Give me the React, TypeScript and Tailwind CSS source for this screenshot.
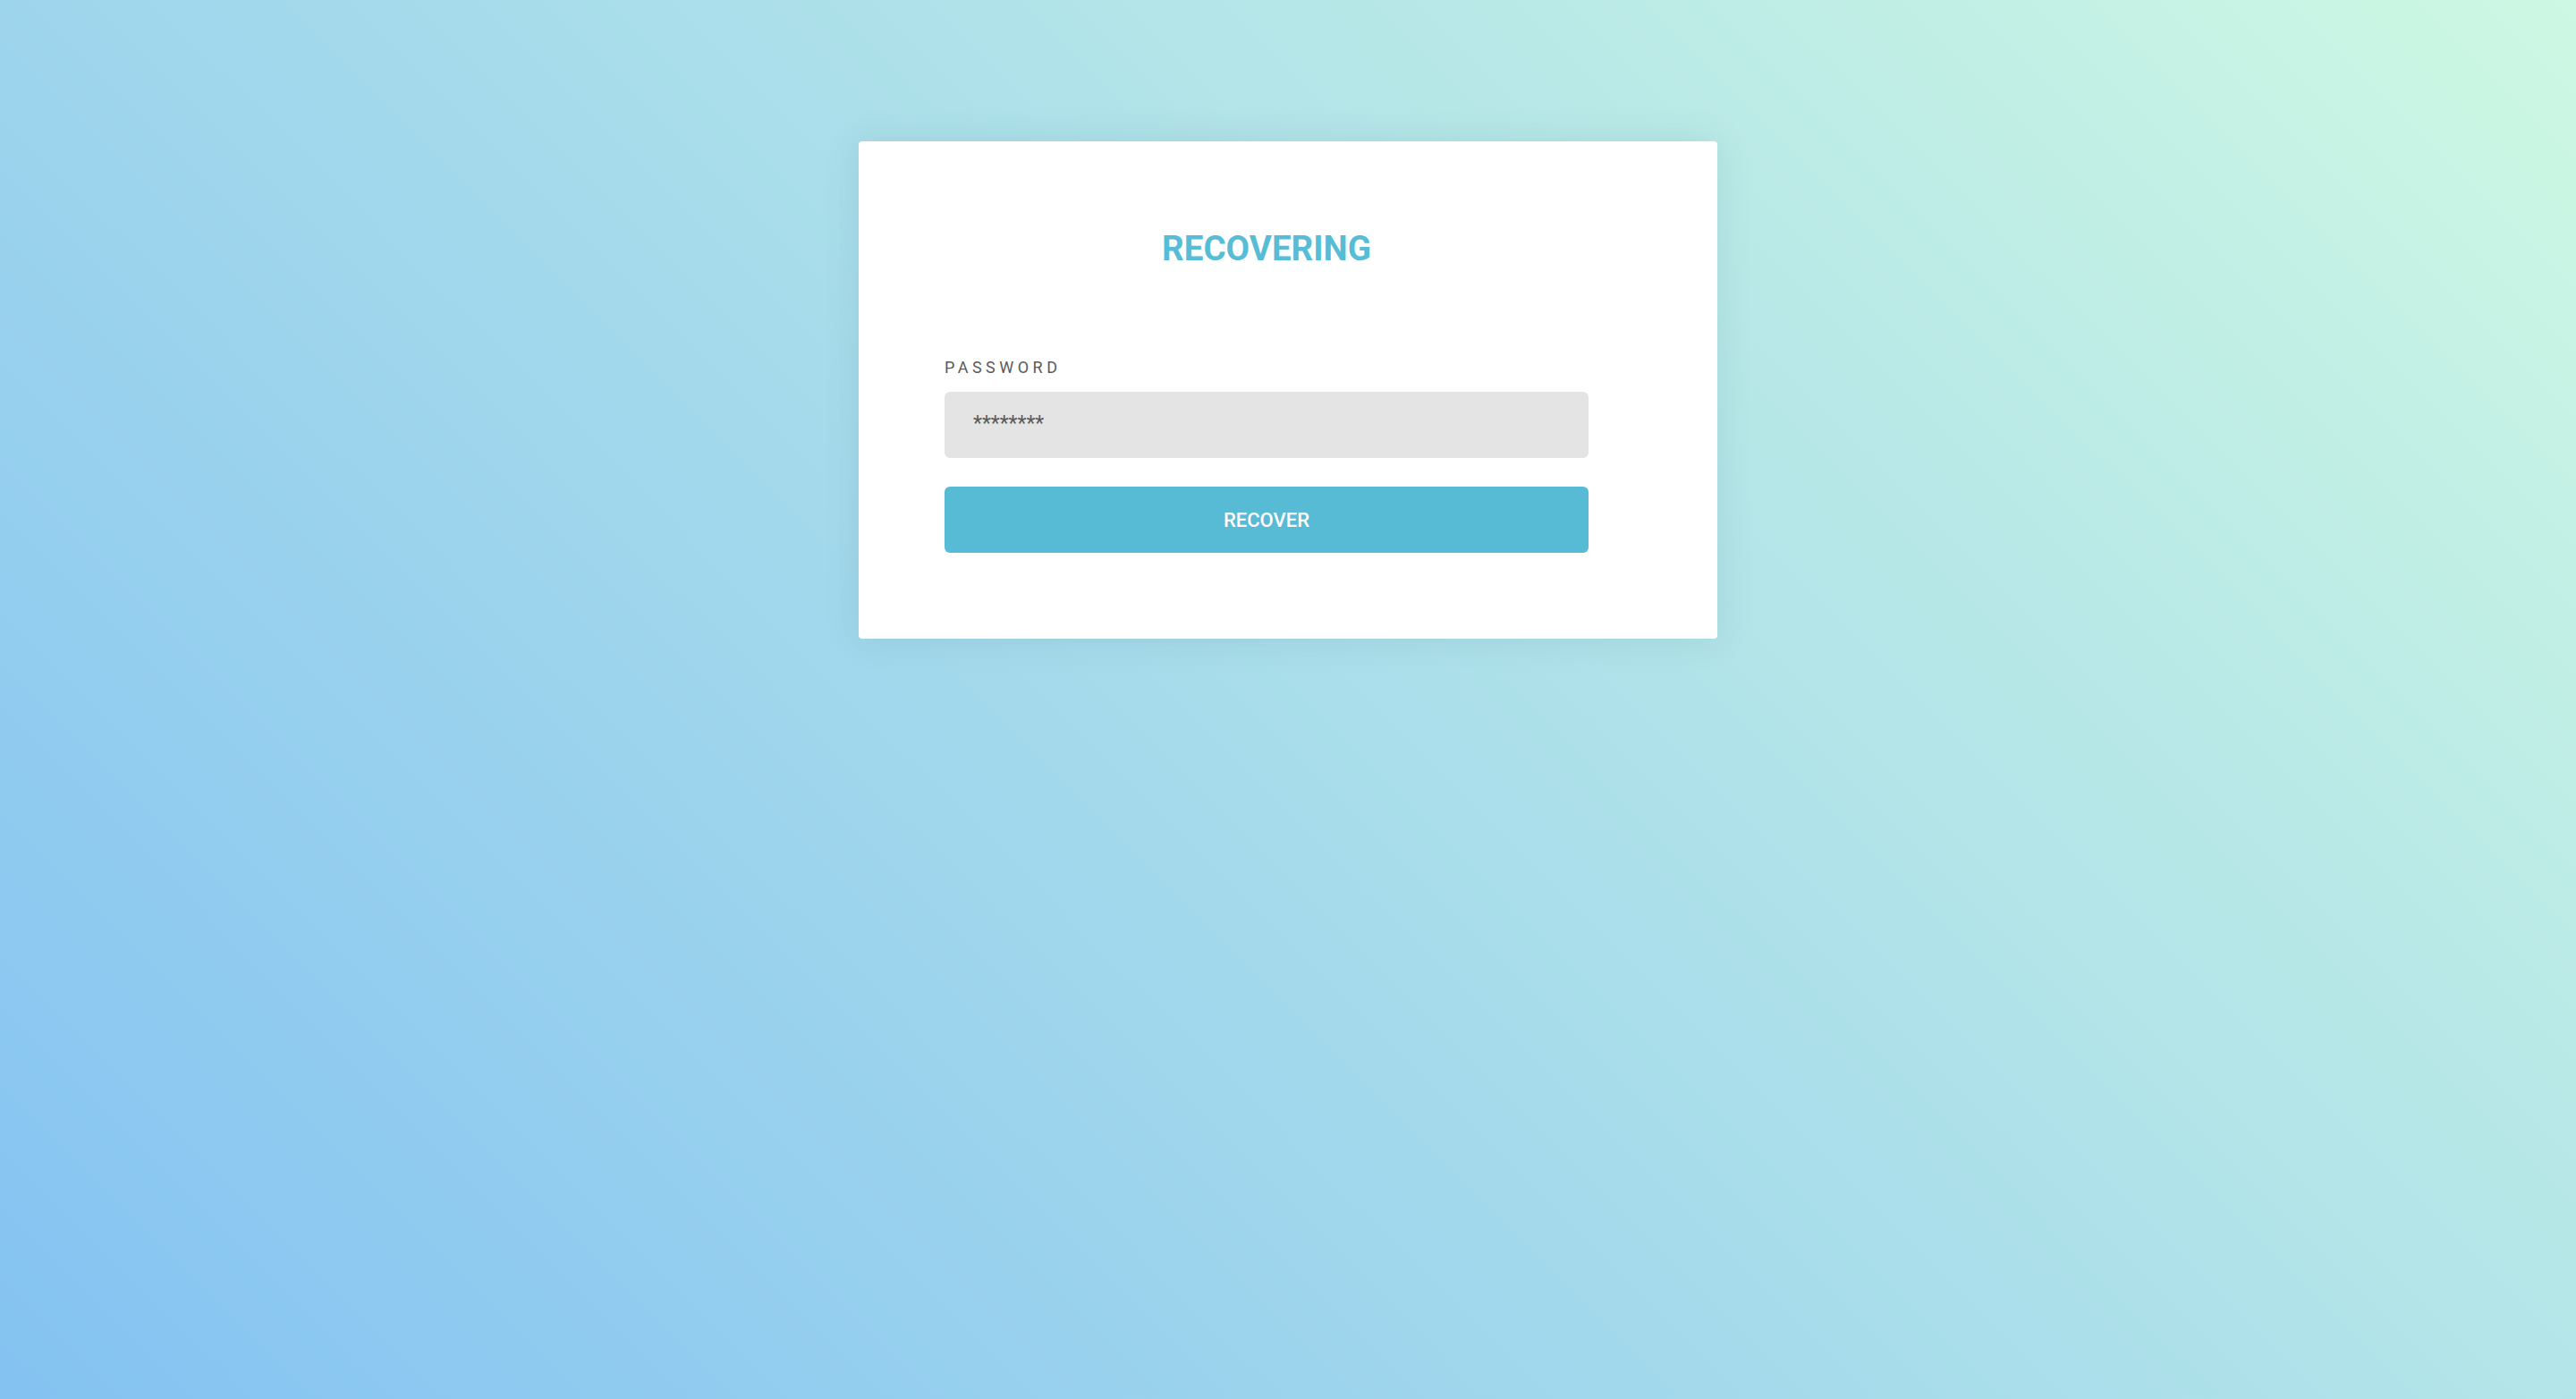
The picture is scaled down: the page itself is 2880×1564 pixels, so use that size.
export default function App() {
  return (
    <div
      className="flex min-h-screen w-full justify-center bg-[linear-gradient(45deg,#84c2f2,#cdf8e3)] pt-[158px]"
      style={{ fontFamily: "Roboto, 'Liberation Sans', sans-serif" }}
    >
      <div className="h-fit w-[960px] rounded-[4px] bg-white pt-[96px] pb-[96px] pl-[96px] shadow-[0_0_40px_rgba(40,90,110,0.12)]">
        <form className="w-[720px]" onSubmit={(e) => e.preventDefault()}>
          <h1 className="text-center text-[38.5px] leading-[48px] font-bold text-[#57bcd6]">
            RECOVERING
          </h1>
          <label
            htmlFor="password"
            className="mt-[97px] mb-[15px] block text-[18px] leading-[24px] font-normal tracking-[4.5px] text-[#5a5a5a]"
          >
            PASSWORD
          </label>
          <input
            id="password"
            type="text"
            readOnly
            value="********"
            className="block h-[74px] w-full rounded-[6px] bg-[#e4e4e4] px-[32px] pb-[4px] text-[23px] text-[#5a5a5a] outline-none"
          />
          <button
            type="submit"
            className="mt-[32px] flex h-[74px] w-full items-center justify-center rounded-[6px] bg-[#57bbd6] text-[22px] font-medium text-white"
          >
            RECOVER
          </button>
        </form>
      </div>
    </div>
  );
}
